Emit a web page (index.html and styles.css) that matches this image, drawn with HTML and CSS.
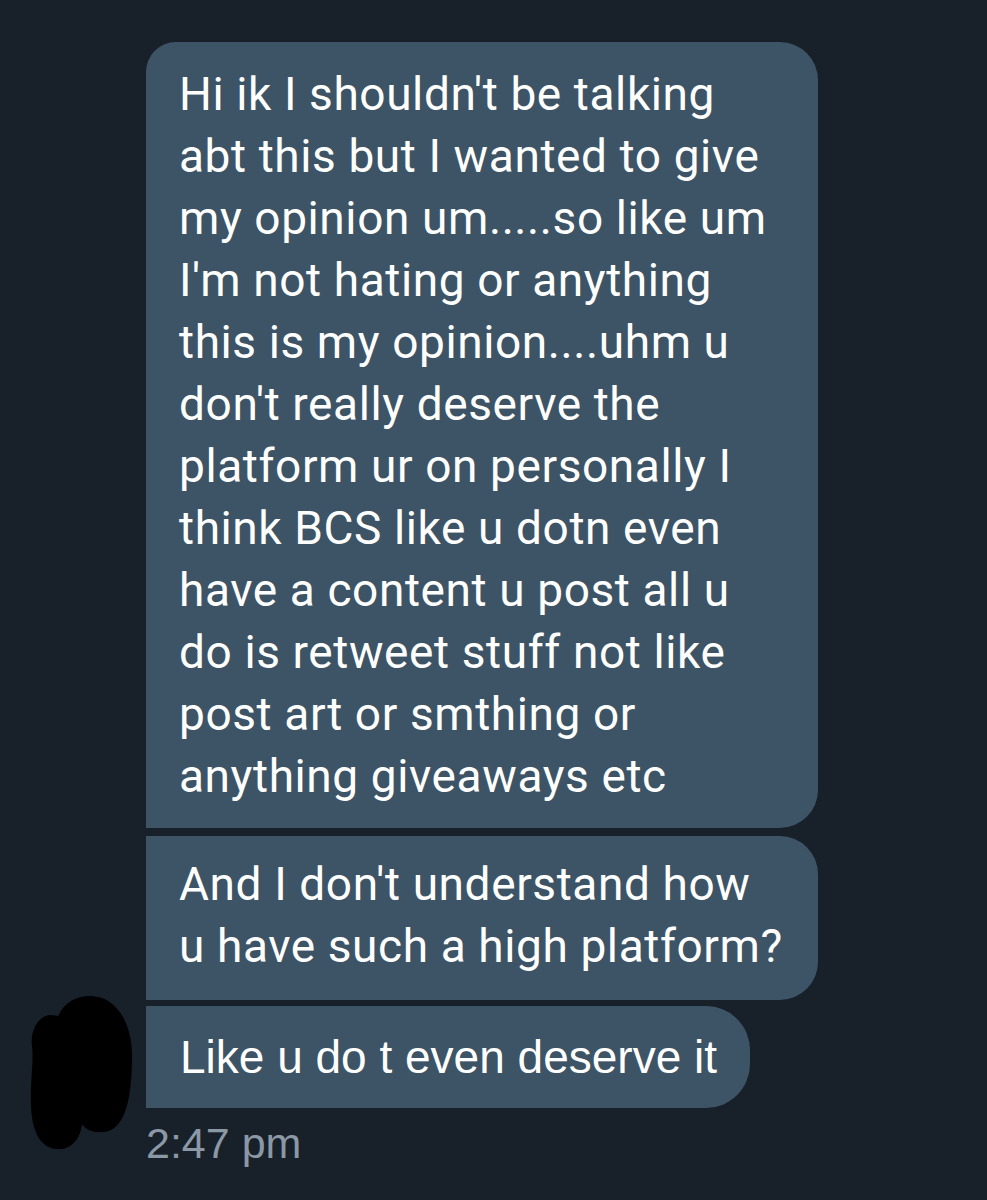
FILE: index.html
```html
<!DOCTYPE html>
<html lang="en">
<head>
<meta charset="utf-8">
<title>Messages</title>
<link rel="stylesheet" href="styles.css">
</head>
<body>
<div class="thread">
  <div class="avatar">
    <svg width="102" height="154" viewBox="0 0 102 154" aria-hidden="true">
      <path d="M60 0 C 85 0 102 25 102 60 C 102 100 96 135 73 136 C 62 137 55 133 52 128 C 50 145 40 154 27 153 C 10 152 2 135 1 110 C 0 85 4 65 2 50 C 0 35 8 20 20 19 C 24 19 27 20 28 20 C 35 6 46 0 60 0 Z" fill="#000"/>
    </svg>
  </div>
  <div class="messages">
    <div class="bubble first">Hi ik I shouldn't be talking<br>abt this but I wanted to give<br>my opinion um.....so like um<br>I'm not hating or anything<br>this is my opinion....uhm u<br>don't really deserve the<br>platform ur on personally I<br>think BCS like u dotn even<br>have a content u post all u<br>do is retweet stuff not like<br>post art or smthing or<br>anything giveaways etc</div>
    <div class="bubble middle">And I don't understand how<br>u have such a high platform?</div>
    <div class="bubble last">Like u do t even deserve it</div>
    <div class="time">2:47 pm</div>
  </div>
</div>
</body>
</html>
```

FILE: styles.css
```css
html, body {
  margin: 0;
  padding: 0;
  background: #18202a;
}
body {
  width: 987px;
  height: 1200px;
  overflow: hidden;
  font-family: Roboto, "Noto Sans", "Liberation Sans", sans-serif;
}
.thread {
  display: flex;
  align-items: flex-end;
  padding: 42px 0 0 30px;
}
.avatar {
  width: 102px;
  height: 154px;
  margin-right: 14px;
  margin-bottom: 21px;
  flex: none;
}
.avatar svg { display: block; }
.messages {
  display: flex;
  flex-direction: column;
  align-items: flex-start;
}
.bubble {
  background: #3d5466;
  color: #ffffff;
  font-size: 46px;
  line-height: 62px;
  letter-spacing: 0.6px;
  padding: 17px 32px 23px 33px;
  white-space: nowrap;
}
.first {
  width: 607px;
  border-radius: 30px 38px 38px 0;
  padding-top: 21px;
  padding-bottom: 21px;
}
.middle {
  width: 607px;
  margin-top: 8px;
  border-radius: 0 38px 38px 0;
}
.last {
  margin-top: 6px;
  font-family: "Liberation Sans", Arial, sans-serif;
  font-size: 46px;
  letter-spacing: 0;
  padding: 20px 33px 20px 34px;
  border-radius: 0 44px 44px 0;
}
.time {
  font-family: "Liberation Sans", Arial, sans-serif;
  font-size: 43px;
  line-height: 56px;
  color: #8b98a5;
  margin-top: 7px;
}
```
